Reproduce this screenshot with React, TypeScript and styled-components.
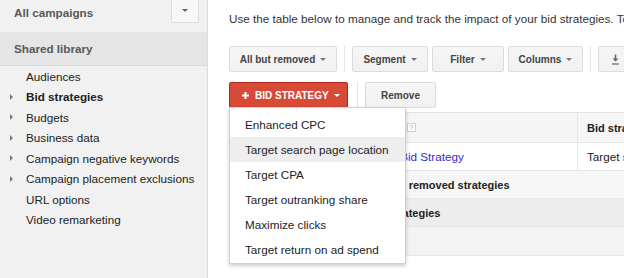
import styled, { createGlobalStyle } from "styled-components"

const GlobalStyle = createGlobalStyle`
  html, body { margin: 0; padding: 0; }
  body {
    width: 624px;
    height: 278px;
    overflow: hidden;
    background: #fff;
    font-family: "Liberation Sans", Arial, sans-serif;
  }
`

const Page = styled.div`
  display: grid;
  grid-template-columns: 208px 1fr;
  height: 278px;
`

/* ---------- sidebar ---------- */

const Sidebar = styled.aside`
  background: #f1f1f1;
  border-right: 1px solid #dcdcdc;
  box-sizing: border-box;
`

const CampaignRow = styled.div`
  height: 31px;
  display: flex;
  align-items: flex-start;
  justify-content: space-between;
  padding: 0 8px 0 14px;
`

const SideTitle = styled.div`
  font-size: 11.7px;
  font-weight: bold;
  color: #585858;
  line-height: 26px;
`

const SideDrop = styled.div`
  width: 28px;
  height: 30px;
  margin-top: -7px;
  box-sizing: border-box;
  border: 1px solid #dcdcdc;
  border-radius: 2px;
  background: #f7f7f7;
  display: flex;
  align-items: center;
  justify-content: center;
  padding-top: 4px;
`

const SharedBand = styled.div`
  height: 34px;
  box-sizing: border-box;
  background: #e5e5e5;
  border-bottom: 1px solid #dadada;
  padding-left: 14px;
  display: flex;
  align-items: center;
  margin-top: 1px;
`

const NavList = styled.ul`
  list-style: none;
  margin: 0;
  padding: 0;
`

const NavItem = styled.li<{ $bold?: boolean }>`
  height: 20.5px;
  display: flex;
  align-items: center;
  padding-left: 10px;
  font-size: 11.7px;
  color: #222;
  font-weight: ${p => (p.$bold ? "bold" : "normal")};
  white-space: nowrap;
`

const Expander = styled.span<{ $show: boolean }>`
  width: 0;
  height: 0;
  margin-right: 13px;
  border-left: 3px solid ${p => (p.$show ? "#7a7a7a" : "transparent")};
  border-top: 3px solid transparent;
  border-bottom: 3px solid transparent;
`

/* ---------- main ---------- */

const Main = styled.main`
  padding: 11px 0 0 21px;
  overflow: hidden;
  min-width: 0;
`

const Intro = styled.p`
  margin: 0;
  font-size: 11.7px;
  line-height: 16px;
  color: #333;
  white-space: nowrap;
`

const Toolbar = styled.div<{ $top: number }>`
  display: flex;
  align-items: center;
  gap: 4px;
  margin-top: ${p => p.$top}px;
  height: 26px;
`

const Button = styled.div<{ $w: number }>`
  flex: none;
  width: ${p => p.$w}px;
  height: 26px;
  box-sizing: border-box;
  border: 1px solid #dcdcdc;
  border-radius: 2px;
  background: linear-gradient(#f6f6f6, #f1f1f1);
  color: #444;
  font-size: 10px;
  font-weight: bold;
  display: flex;
  align-items: center;
  justify-content: center;
  gap: 5px;
`

const RedButton = styled(Button)`
  background: #d84a38;
  border-color: #b0281a;
  color: #fff;
  justify-content: flex-start;
  padding-left: 12px;
  gap: 0;
`

const Caret = styled.span<{ $color?: string }>`
  width: 0;
  height: 0;
  border-top: 3px solid ${p => p.$color || "#777"};
  border-left: 3px solid transparent;
  border-right: 3px solid transparent;
`

const Divider = styled.span<{ $l: number; $r: number }>`
  flex: none;
  width: 1px;
  height: 26px;
  background: #e3e3e3;
  margin: 0 ${p => p.$r}px 0 ${p => p.$l}px;
`

const MenuAnchor = styled.div`
  position: relative;
  flex: none;
`

const Menu = styled.ul`
  position: absolute;
  top: calc(100% - 1px);
  left: 0;
  width: 177px;
  box-sizing: border-box;
  margin: 0;
  padding: 4px 0 1px;
  list-style: none;
  background: #fff;
  border: 1px solid rgba(0, 0, 0, 0.18);
  box-shadow: 0 2px 4px rgba(0, 0, 0, 0.2);
  z-index: 10;
`

const MenuItem = styled.li<{ $active?: boolean }>`
  height: 25px;
  display: flex;
  align-items: center;
  padding-left: 15px;
  font-size: 11.7px;
  color: #222;
  white-space: nowrap;
  background: ${p => (p.$active ? "#eeeeee" : "transparent")};
`

const Table = styled.div`
  margin-top: 4px;
  width: 560px;
  border-top: 1px solid #e3e3e3;
`

const Row = styled.div<{ $bg: string; $h: number }>`
  display: grid;
  grid-template-columns: 107px 241px 1fr;
  height: ${p => p.$h}px;
  background: ${p => p.$bg};
  border-bottom: 1px solid #e6e6e6;
  box-sizing: border-box;
`

const Cell = styled.div<{ $bold?: boolean; $line?: boolean; $size?: number }>`
  display: flex;
  align-items: center;
  gap: 5px;
  padding-left: ${p => (p.$line ? 9 : 2)}px;
  border-left: ${p => (p.$line ? "1px solid #e6e6e6" : "none")};
  font-size: ${p => p.$size || 11.7}px;
  font-weight: ${p => (p.$bold ? "bold" : "normal")};
  color: #222;
  white-space: nowrap;
  overflow: hidden;
`

const SpanCell = styled(Cell)`
  grid-column: 2 / 3;
`

const Link = styled.span`
  color: #2f2fcf;
`

const Help = styled.span`
  width: 9px;
  height: 9px;
  box-sizing: border-box;
  border: 1px solid #cfcfcf;
  background: #fff;
  color: #999;
  font-size: 7px;
  font-weight: normal;
  display: inline-flex;
  align-items: center;
  justify-content: center;
`

const navItems = [
  { label: "Audiences", arrow: false },
  { label: "Bid strategies", arrow: true, bold: true },
  { label: "Budgets", arrow: true },
  { label: "Business data", arrow: true },
  { label: "Campaign negative keywords", arrow: true },
  { label: "Campaign placement exclusions", arrow: true },
  { label: "URL options", arrow: false },
  { label: "Video remarketing", arrow: false },
]

const strategies = [
  "Enhanced CPC",
  "Target search page location",
  "Target CPA",
  "Target outranking share",
  "Maximize clicks",
  "Target return on ad spend",
]

export default function App() {
  return (
    <>
      <GlobalStyle />
      <Page>
        <Sidebar>
          <CampaignRow>
            <SideTitle>All campaigns</SideTitle>
            <SideDrop>
              <Caret $color="#666" />
            </SideDrop>
          </CampaignRow>
          <SharedBand>
            <SideTitle>Shared library</SideTitle>
          </SharedBand>
          <NavList>
            {navItems.map(item => (
              <NavItem key={item.label} $bold={item.bold}>
                <Expander $show={item.arrow} />
                {item.label}
              </NavItem>
            ))}
          </NavList>
        </Sidebar>

        <Main>
          <Intro>
            Use the table below to manage and track the impact of your bid strategies. To see
          </Intro>

          <Toolbar $top={19}>
            <Button $w={108}>
              All but removed <Caret />
            </Button>
            <Divider $l={3} $r={3} />
            <Button $w={76}>
              Segment <Caret />
            </Button>
            <Button $w={72}>
              Filter <Caret />
            </Button>
            <Button $w={75}>
              Columns <Caret />
            </Button>
            <Divider $l={3} $r={3} />
            <Button $w={34}>
              <svg width="9" height="11" viewBox="0 0 9 11">
                <path d="M4.5 0.5v6" stroke="#666" strokeWidth="1.6" />
                <path d="M1.5 4.5l3 3 3-3z" fill="#666" />
                <path d="M1 10h7" stroke="#666" strokeWidth="1.2" />
              </svg>
            </Button>
          </Toolbar>

          <Toolbar $top={10}>
            <MenuAnchor>
              <RedButton $w={119}>
                <svg width="7" height="7" viewBox="0 0 7 7" style={{ marginRight: 6 }}>
                  <path d="M3.5 0v7M0 3.5h7" stroke="#fff" strokeWidth="2" />
                </svg>
                BID STRATEGY
                <span style={{ width: 5 }} />
                <Caret $color="#fff" />
              </RedButton>
              <Menu>
                {strategies.map((s, i) => (
                  <MenuItem key={s} $active={i === 1}>
                    {s}
                  </MenuItem>
                ))}
              </Menu>
            </MenuAnchor>
            <Divider $l={5} $r={3} />
            <Button $w={71}>Remove</Button>
          </Toolbar>

          <Table>
            <Row $bg="#f5f5f5" $h={30}>
              <Cell />
              <Cell $bold $size={11}>
                Bid strategy <Help>?</Help>
              </Cell>
              <Cell $bold $line $size={11}>
                Bid strategy type
              </Cell>
            </Row>
            <Row $bg="#ffffff" $h={28}>
              <Cell />
              <Cell>
                <Link>Search Top Bid Strategy</Link>
              </Cell>
              <Cell $line>Target search page location</Cell>
            </Row>
            <Row $bg="#f6f6f6" $h={28}>
              <SpanCell $bold $size={11}>
                Total - all but removed strategies
              </SpanCell>
            </Row>
            <Row $bg="#ededed" $h={28}>
              <SpanCell $bold $size={11}>
                Total - all strategies
              </SpanCell>
            </Row>
            <Row $bg="#f3f3f3" $h={29}>
              <Cell />
            </Row>
          </Table>
        </Main>
      </Page>
    </>
  )
}
